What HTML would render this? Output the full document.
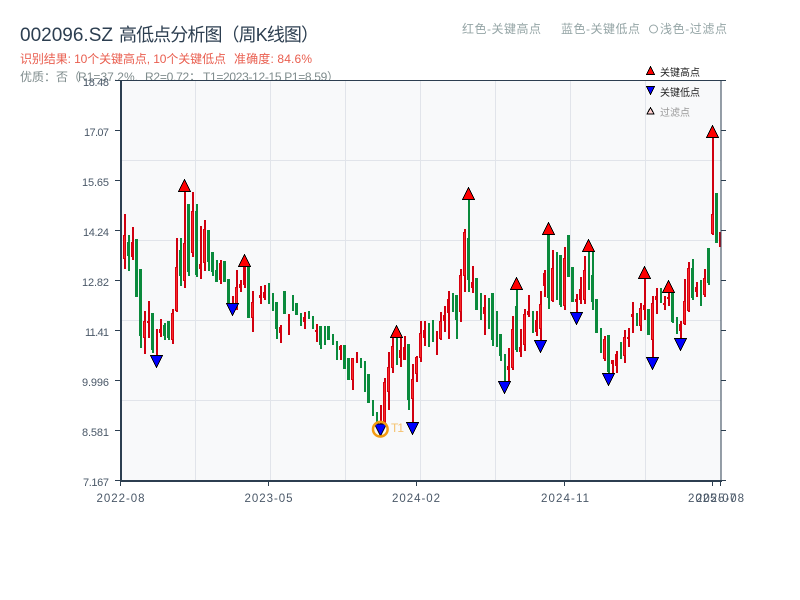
<!DOCTYPE html>
<html><head><meta charset="utf-8"><style>
html,body{margin:0;padding:0;background:#fff;width:800px;height:600px;overflow:hidden}
svg{display:block}
text{font-family:"Liberation Sans","Noto Sans CJK SC",sans-serif}
</style></head><body>
<svg width="800" height="600" viewBox="0 0 800 600" xmlns="http://www.w3.org/2000/svg">
<rect width="800" height="600" fill="#fff"/>
<text x="20" y="41" font-size="19" fill="#2c3e50" textLength="93" lengthAdjust="spacing">002096.SZ</text>
<text x="119" y="41" font-size="18" fill="#2c3e50" textLength="200" lengthAdjust="spacing">高低点分析图（周K线图）</text>
<text x="20" y="63" font-size="12" fill="#e74c3c" fill-opacity=".9" textLength="206" lengthAdjust="spacing">识别结果: 10个关键高点, 10个关键低点</text>
<text x="234" y="63" font-size="12" fill="#e74c3c" fill-opacity=".9" textLength="78" lengthAdjust="spacing">准确度: 84.6%</text>
<text x="20" y="81" font-size="12" fill="#7f8c8d" textLength="60" lengthAdjust="spacing">优质：否（</text>
<text x="78" y="81" font-size="12" fill="#7f8c8d" textLength="60" lengthAdjust="spacing">R1=37.2%,</text>
<text x="145" y="81" font-size="12" fill="#7f8c8d" textLength="56" lengthAdjust="spacing">R2=0.72；</text>
<text x="203" y="81" font-size="12" fill="#7f8c8d" textLength="136" lengthAdjust="spacing">T1=2023-12-15 P1=8.59）</text>
<text x="462" y="33" font-size="12" fill="#95a5a6" textLength="79" lengthAdjust="spacing">红色-关键高点</text>
<text x="561" y="33" font-size="12" fill="#95a5a6" textLength="79" lengthAdjust="spacing">蓝色-关键低点</text>
<circle cx="653.5" cy="29" r="4" fill="none" stroke="#95a5a6" stroke-width="1"/>
<text x="660" y="33" font-size="12" fill="#95a5a6" textLength="67" lengthAdjust="spacing">浅色-过滤点</text>

<rect x="121" y="81" width="600" height="400" fill="#f8f9fa"/>
<path d="M195.500 81V481M270.500 81V481M345.500 81V481M420.500 81V481M495.500 81V481M570.500 81V481M645.500 81V481M121 160.500H721M121 240.500H721M121 320.500H721M121 400.500H721" stroke="#e1e4ea" stroke-width="1" fill="none"/>

<g fill="none">
<!-- green wicks -->
<path stroke="#0a8a3c" stroke-width="2" d="M129 235V271M137 239V297M141 269V348M153 313V353M165 323V340M169 321V340M181 238V286M189 204V276M197 204V277M209 230V271M213 252V276M217 260V282M225 261V282M229 279V303M249 267V318M269 283V304M273 293V311M277 302V339M285 291V314M293 295V311M297 303V315M301 313V326M309 311V319M313 316V329M321 326V349M325 326V345M329 326V340M333 334V345M337 341V360M345 345V369M349 358V380M361 358V368M365 361V392M369 374V403M373 400V416M377 412V423M397 337V365M409 344V410M429 323V347M433 320V342M453 293V312M457 295V339M469 200V292M477 278V310M481 293V320M489 298V329M493 293V346M497 311V347M501 334V361M505 354V381M517 288V352M533 311V333M549 233V309M557 252V300M561 255V307M569 235V277M573 267V302M589 250V290M593 250V310M597 299V333M601 328V353M609 335V375M621 342V359M637 313V326M649 309V335M661 288V303M673 291V323M677 317V334M693 259V300M701 280V306M709 248V285M717 193V243"/>
<!-- green bodies -->
<path stroke="#0a8a3c" stroke-width="3" d="M128.500 242V256M136.500 239V297M140.500 269V336M152.500 313V350M164.500 325V336M168.500 321V338M180.500 250V276M188.500 204V272M196.500 211V275M208.500 230V262M212.500 252V272M216.500 270V282M224.500 261V282M228.500 279V303M248.500 267V318M276.500 302V329M284.500 291V314M296.500 303V315M320.500 326V345M328.500 326V340M344.500 345V369M348.500 358V380M368.500 374V403M408.500 344V400M456.500 295V320M468.500 238V280M476.500 278V310M492.500 293V340M500.500 334V356M516.500 306V350M548.500 233V298M560.500 255V305M568.500 235V277M572.500 267V302M592.500 275V302M596.500 299V333M608.500 335V372M648.500 309V335M672.500 291V322M692.500 268V298M708.500 248V283M716.500 193V243"/>
<!-- red wicks -->
<path stroke="#d0000f" stroke-width="2" d="M121 252V280M125 214V269M133 227V260M145 311V354M149 301V338M157 329V357M161 319V337M173 309V344M177 238V312M185 192V288M193 192V257M201 226V279M205 220V271M221 260V284M233 296V305M237 270V310M241 280V292M245 267V288M253 291V332M261 286V304M265 285V300M281 325V343M289 314V335M305 312V329M317 324V342M341 345V360M353 358V390M357 352V363M381 405V425M385 378V425M389 352V410M393 337V373M401 335V367M405 336V358M413 364V425M417 356V382M421 321V362M425 321V346M437 331V355M441 312V340M445 306V332M449 291V339M461 269V322M465 229V292M473 266V293M485 295V335M509 348V381M513 316V370M521 329V357M525 309V351M529 295V317M537 311V336M541 291V341M545 270V297M553 250V302M565 247V310M577 294V313M581 277V304M585 256V304M605 336V361M613 360V375M617 351V373M625 330V363M629 328V347M633 302V333M641 303V331M645 278V320M653 296V358M657 288V314M665 296V310M669 291V306M681 321V338M685 279V325M689 262V312M697 282V297M705 269V297M713 137V235M720 232V247"/>
<!-- red bodies -->
<path stroke="#d8000f" stroke-width="3" d="M124.500 235V259M132.500 242V257M144.500 321V338M148.500 321V323M160.500 329V333M172.500 313V340M176.500 267V311M184.500 243V281M192.500 211V253M200.500 264V269M204.500 229V263M220.500 263V280M236.500 287V307M240.500 284V288M244.500 267V285M252.500 302V318M260.500 295V298M264.500 292V298M280.500 327V333M304.500 317V322M316.500 330V332M340.500 346V350M352.500 358V380M384.500 382V422M388.500 367V392M392.500 346V368M400.500 350V358M404.500 347V360M412.500 379V399M416.500 357V374M420.500 333V358M424.500 330V338M440.500 321V339M444.500 315V321M448.500 299V313M460.500 275V312M464.500 232V276M472.500 282V288M484.500 307V314M508.500 366V370M512.500 329V368M520.500 347V352M524.500 314V345M528.500 311V315M536.500 320V332M540.500 304V329M544.500 273V286M552.500 268V301M564.500 258V306M576.500 299V302M580.500 289V300M584.500 270V300M604.500 339V359M612.500 360V364M616.500 354V366M624.500 337V356M628.500 337V339M632.500 314V317M640.500 308V326M644.500 305V310M652.500 303V340M656.500 296V300M664.500 303V305M668.500 297V299M680.500 324V331M684.500 301V324M688.500 268V311M696.500 287V292M704.500 278V295M712.500 214V234"/>
<path stroke="#f52a2a" stroke-width="1" d="M124.500 236V258M144.500 322V337M172.500 314V339M176.500 268V310M184.500 244V280M192.500 212V252M204.500 230V262M236.500 288V306M252.500 303V317M352.500 359V379M384.500 383V421M388.500 368V391M392.500 347V367M412.500 380V398M416.500 358V373M420.500 334V357M440.500 322V338M460.500 276V311M464.500 233V275M512.500 330V367M524.500 315V344M540.500 305V328M552.500 269V300M564.500 259V305M584.500 271V299M604.500 340V358M624.500 338V355M640.500 309V325M652.500 304V339M684.500 302V323M688.500 269V310M704.500 279V294M712.500 215V233"/>
</g>

<!-- axes -->
<path d="M121 80.500H722M721 80V481" stroke="#2c3e50" stroke-width="1" fill="none"/>
<path d="M121 80V482M120 481H722" stroke="#2c3e50" stroke-width="2" fill="none"/>
<path d="M115 80.500H120M115 130.500H120M115 180.500H120M115 230.500H120M115 280.500H120M115 330.500H120M115 380.500H120M115 430.500H120M115 480.500H120M721 80.500H726M721 130.500H726M721 180.500H726M721 230.500H726M721 280.500H726M721 330.500H726M721 380.500H726M721 430.500H726M721 480.500H726M120.500 481V486M268.500 481V486M416.500 481V486M564.500 481V486M712.500 481V486M720.500 481V486" stroke="#2c3e50" stroke-width="1" fill="none"/>

<!-- high markers -->
<g fill="#ff0000" stroke="#000" stroke-width="1" shape-rendering="crispEdges">
<path d="M184.500 179.500L178.500 191.500H190.500Z"/>
<path d="M244.500 254.500L238.500 266.500H250.500Z"/>
<path d="M396.500 325.500L390.500 337.500H402.500Z"/>
<path d="M468.500 187.500L462.500 199.500H474.500Z"/>
<path d="M516.500 277.500L510.500 289.500H522.500Z"/>
<path d="M548.500 222.500L542.500 234.500H554.500Z"/>
<path d="M588.500 239.500L582.500 251.500H594.500Z"/>
<path d="M644.500 266.500L638.500 278.500H650.500Z"/>
<path d="M668.500 280.500L662.500 292.500H674.500Z"/>
<path d="M712.500 125.500L706.500 137.500H718.500Z"/>
</g>
<!-- low markers -->
<g fill="#0000ff" stroke="#000" stroke-width="1" shape-rendering="crispEdges">
<path d="M156.500 367.500L150.500 355.500H162.500Z"/>
<path d="M232.500 315.500L226.500 303.500H238.500Z"/>
<path d="M380.500 436L374.500 424H386.500Z"/>
<path d="M412.500 434.500L406.500 422.500H418.500Z"/>
<path d="M504.500 393.500L498.500 381.500H510.500Z"/>
<path d="M540.500 352.500L534.500 340.500H546.500Z"/>
<path d="M576.500 324.500L570.500 312.500H582.500Z"/>
<path d="M608.500 385.500L602.500 373.500H614.500Z"/>
<path d="M652.500 369.500L646.500 357.500H658.500Z"/>
<path d="M680.500 350.500L674.500 338.500H686.500Z"/>
</g>
<circle cx="380.300" cy="429.200" r="7.300" fill="none" stroke="#f39c12" stroke-width="2.500"/>
<text x="391" y="432" font-size="12" fill="#f39c12" fill-opacity=".6" textLength="13" lengthAdjust="spacing">T1</text>

<!-- axis labels -->
<g font-size="11" fill="#4a5868" text-anchor="end">
<text x="109" y="86" textLength="26" lengthAdjust="spacing">18.48</text>
<text x="109" y="136" textLength="25" lengthAdjust="spacing">17.07</text>
<text x="109" y="186" textLength="27" lengthAdjust="spacing">15.65</text>
<text x="109" y="236" textLength="26" lengthAdjust="spacing">14.24</text>
<text x="109" y="286" textLength="27" lengthAdjust="spacing">12.82</text>
<text x="109" y="336" textLength="24" lengthAdjust="spacing">11.41</text>
<text x="109" y="386" textLength="27" lengthAdjust="spacing">9.996</text>
<text x="109" y="436" textLength="27" lengthAdjust="spacing">8.581</text>
<text x="109" y="486" textLength="26" lengthAdjust="spacing">7.167</text>
</g>
<g font-size="11.5" fill="#4a5868" text-anchor="middle">
<text x="120.500" y="502" textLength="48" lengthAdjust="spacing">2022-08</text>
<text x="268.500" y="502" textLength="48" lengthAdjust="spacing">2023-05</text>
<text x="416" y="502" textLength="48" lengthAdjust="spacing">2024-02</text>
<text x="565" y="502" textLength="48" lengthAdjust="spacing">2024-11</text>
<text x="712" y="502" textLength="48" lengthAdjust="spacing">2025-07</text>
<text x="720" y="502" textLength="48" lengthAdjust="spacing">2025-08</text>
</g>

<!-- legend -->
<g stroke="#000" stroke-width="1" shape-rendering="crispEdges">
<path d="M650.500 66.500L646.500 74.500H654.500Z" fill="#ff0000"/>
<path d="M650.500 94.500L646.500 86.500H654.500Z" fill="#0000ff"/>
<path d="M650.500 107.500L647 114H654Z" fill="#ffd0d0"/>
</g>
<text x="660" y="76" font-size="10" fill="#222" textLength="40" lengthAdjust="spacing">关键高点</text>
<text x="660" y="96" font-size="10" fill="#222" textLength="40" lengthAdjust="spacing">关键低点</text>
<text x="660" y="116" font-size="10" fill="#999" textLength="30" lengthAdjust="spacing">过滤点</text>
</svg>
</body></html>
